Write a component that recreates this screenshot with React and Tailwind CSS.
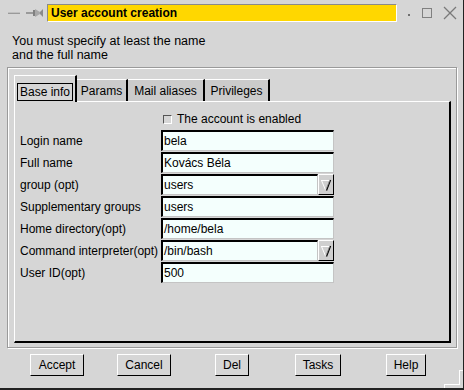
import React from 'react';

const font = { fontFamily: '"Liberation Sans", Arial, sans-serif' };

function DropButton() {
    return (
        <div className="w-[16px] h-[21px] bg-[#cfcfcf] border-t border-l border-t-white border-l-white border-r border-b border-r-black border-b-black flex items-center justify-center">
            <svg width="12" height="14" viewBox="0 0 12 14">
                <line x1="1" y1="2.5" x2="10" y2="2.5" stroke="#ffffff" strokeWidth="1" />
                <line x1="1.5" y1="2.5" x2="5.5" y2="12" stroke="#ffffff" strokeWidth="1" />
                <line x1="10.5" y1="2" x2="6.5" y2="12.5" stroke="#000000" strokeWidth="1.3" />
                <line x1="9.5" y1="3" x2="6" y2="11.5" stroke="#888888" strokeWidth="0.8" />
            </svg>
        </div>
    );
}

function Field({ label, value, combo }) {
    return (
        <div className="flex items-start h-[22px]">
            <div className="w-[141px] h-[21px] flex items-center text-[12px] text-black whitespace-nowrap">{label}</div>
            <div className="flex">
                <div
                    className={`h-[21px] ${combo ? 'w-[157px]' : 'w-[173px]'} bg-[#f4fffd] border-t-2 border-l-2 border-t-black border-l-black border-r border-b border-r-[#c4c4c4] border-b-[#c4c4c4] flex items-center pl-[1px] text-[12px] text-black`}
                >
                    {value}
                </div>
                {combo && <DropButton />}
            </div>
        </div>
    );
}

function Button({ children, className = '' }) {
    return (
        <button
            className={`h-[22px] bg-[#d6d6d6] border-t border-l border-t-white border-l-white border-r border-b border-r-black border-b-black text-[12px] text-black flex items-center justify-center ${className}`}
        >
            {children}
        </button>
    );
}

export default function App() {
    const fields = [
        { label: 'Login name', value: 'bela' },
        { label: 'Full name', value: 'Kovács Béla' },
        { label: 'group (opt)', value: 'users', combo: true },
        { label: 'Supplementary groups', value: 'users' },
        { label: 'Home directory(opt)', value: '/home/bela' },
        { label: 'Command interpreter(opt)', value: '/bin/bash', combo: true },
        { label: 'User ID(opt)', value: '500' },
    ];

    return (
        <div style={font} className="w-[464px] h-[390px] bg-[#d6d6d6] border-r border-b-2 border-r-[#222] border-b-[#222] flex flex-col relative overflow-hidden">
            {/* Title bar */}
            <div className="flex items-start h-[25px] pt-[4px]">
                <svg width="40" height="18" viewBox="0 0 40 18" className="ml-[6px] shrink-0">
                    <rect x="2" y="8" width="12" height="2" fill="#9a9a9a" />
                    <rect x="2" y="8" width="12" height="1" fill="#c0c0c0" />
                    <rect x="20" y="8" width="7" height="2" fill="#9a9a9a" />
                    <rect x="27" y="6" width="2" height="6" fill="#808080" />
                    <polygon points="29,5 34,8 34,10 29,13" fill="#a8a8a8" />
                    <polygon points="34,8 34,10 37,13 37,5" fill="#8a8a8a" />
                </svg>
                <div className="ml-[1px] w-[350px] h-[18px] bg-[#ffd700] border-t border-l border-t-[#8a8a8a] border-l-[#8a8a8a] border-r border-b border-r-white border-b-white flex items-center pl-[3px] text-[12px] font-bold text-black">
                    User account creation
                </div>
                <div className="flex items-center h-[18px] ml-[11px]">
                    <div className="w-[2px] h-[2px] bg-[#707070] mt-[3px]" />
                    <div className="ml-[12px] w-[10px] h-[10px] border border-[#808080]" />
                    <svg width="14" height="14" viewBox="0 0 14 14" className="ml-[11px]">
                        <line x1="1" y1="1" x2="13" y2="13" stroke="#7a7a7a" strokeWidth="1.2" />
                        <line x1="13" y1="1" x2="1" y2="13" stroke="#7a7a7a" strokeWidth="1.2" />
                    </svg>
                </div>
            </div>

            {/* Message */}
            <div className="pl-[12px] mt-[9px] text-[12.5px] leading-[14px] text-black">
                <div>You must specify at least the name</div>
                <div>and the full name</div>
            </div>

            {/* Group frame */}
            <div className="mt-[5px] ml-[7px] w-[450px] h-[281px] border border-[#9a9a9a] shadow-[1px_1px_0_#ffffff]">
                <div className="w-full h-full border-t border-l border-white pt-[6px] pl-[5px] pr-[5px] flex flex-col">
                    {/* Tabs */}
                    <div className="flex items-end h-[26px] text-[12px] text-black">
                        <div className="relative z-10 w-[63px] h-[27px] -mb-px bg-[#d6d6d6] border-t border-l border-white border-r-2 border-r-black flex items-end pl-[2px] pb-[1px]">
                            <div className="w-[56px] h-[18px] border border-black flex items-center justify-center">Base info</div>
                        </div>
                        <div className="w-[51px] h-[22px] bg-[#cbcbcb] border-t border-t-white border-r-2 border-r-black flex items-center justify-center">Params</div>
                        <div className="w-[77px] h-[22px] bg-[#cbcbcb] border-t border-t-white border-r-2 border-r-black flex items-center justify-center">Mail aliases</div>
                        <div className="w-[65px] h-[22px] bg-[#cbcbcb] border-t border-t-white border-r-2 border-r-black flex items-center justify-center">Privileges</div>
                    </div>

                    {/* Tab page */}
                    <div className="w-[437px] h-[242px] border-t border-l border-white border-r-2 border-b-2 border-r-black border-b-black pl-[5px] pt-[10px]">
                        <div className="flex items-start h-[18px] pl-[143px] text-[12px] leading-[14px] text-black">
                            <div className="mt-[3px] w-[9px] h-[9px] border-t border-l border-t-[#555] border-l-[#555] border-r border-b border-r-white border-b-white bg-[#d6d6d6]" />
                            <span className="ml-[5px]">The account is enabled</span>
                        </div>
                        <div className="flex flex-col">
                            {fields.map((f) => (
                                <Field key={f.label} {...f} />
                            ))}
                        </div>
                    </div>
                </div>
            </div>

            {/* Buttons */}
            <div className="flex mt-[6px] pl-[30px]">
                <Button className="w-[54px]">Accept</Button>
                <Button className="w-[54px] ml-[33px]">Cancel</Button>
                <Button className="w-[34px] ml-[44px]">Del</Button>
                <Button className="w-[46px] ml-[46px]">Tasks</Button>
                <Button className="w-[40px] ml-[45px]">Help</Button>
            </div>

            {/* Resize grip */}
            <div className="absolute right-[3px] bottom-0 w-[16px] h-[4px] border-l border-t border-white" />
            <div className="absolute right-0 bottom-[4px] w-[4px] h-[14px] border-l border-t border-white" />
        </div>
    );
}
